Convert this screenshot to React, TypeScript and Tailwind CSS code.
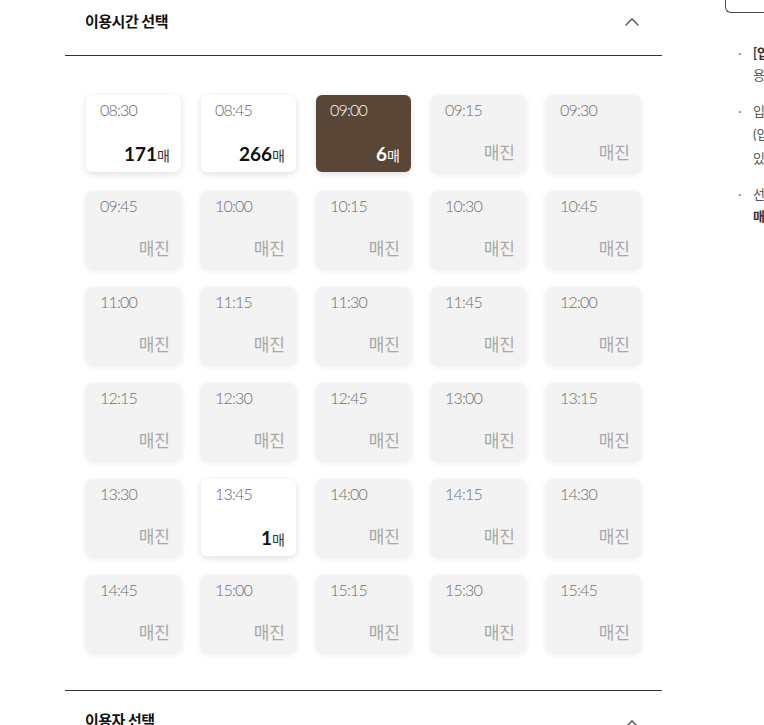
import React from "react";

type Slot = { t: string; n?: number; sel?: boolean };

const times = [
  "08:30","08:45","09:00","09:15","09:30",
  "09:45","10:00","10:15","10:30","10:45",
  "11:00","11:15","11:30","11:45","12:00",
  "12:15","12:30","12:45","13:00","13:15",
  "13:30","13:45","14:00","14:15","14:30",
  "14:45","15:00","15:15","15:30","15:45",
];
const avail: Record<string, number> = { "08:30": 171, "08:45": 266, "09:00": 6, "13:45": 1 };

const slots: Slot[] = times.map((t) => ({ t, n: avail[t], sel: t === "09:00" }));

function Chevron() {
  return (
    <svg width="16" height="10" viewBox="0 0 16 10" fill="none">
      <path d="M1.5 8.5 L8 2 L14.5 8.5" stroke="#666" strokeWidth="1.6" />
    </svg>
  );
}

function Card({ s }: { s: Slot }) {
  if (s.sel) {
    return (
      <div className="h-[77px] rounded-[6px] bg-[#5a4637] shadow-[0_2px_6px_rgba(0,0,0,0.12)] flex flex-col justify-between pl-[14px] pr-[11px] pt-[5px] pb-[4px]">
        <div className="text-[16px] leading-5 tracking-[-0.8px] text-white font-light">{s.t}</div>
        <div className="text-right text-white leading-6">
          <span className="text-[19px] font-bold">{s.n}</span>
          <span className="text-[14px]">매</span>
        </div>
      </div>
    );
  }
  if (s.n) {
    return (
      <div className="h-[77px] rounded-[6px] bg-white shadow-[0_2px_7px_rgba(0,0,0,0.13)] flex flex-col justify-between pl-[14px] pr-[11px] pt-[5px] pb-[4px]">
        <div className="text-[16px] leading-5 tracking-[-0.8px] text-[#666] font-light">{s.t}</div>
        <div className="text-right text-[#111] leading-6">
          <span className="text-[19px] font-bold">{s.n}</span>
          <span className="text-[14px] text-[#333]">매</span>
        </div>
      </div>
    );
  }
  return (
    <div className="h-[77px] rounded-[6px] bg-[#f3f3f3] shadow-[0_2px_6px_rgba(0,0,0,0.09)] flex flex-col justify-between pl-[14px] pr-[11px] pt-[5px] pb-[7px]">
      <div className="text-[16px] leading-5 tracking-[-0.8px] text-[#707070] font-light">{s.t}</div>
      <div className="text-right text-[17px] leading-6 text-[#a8a8a8]">매진</div>
    </div>
  );
}

export default function App() {
  return (
    <div
      className="w-[764px] h-[725px] overflow-hidden bg-white flex"
      style={{ fontFamily: "Lato, 'Noto Sans CJK KR', sans-serif" }}
    >
      <div className="ml-[65px] w-[597px] shrink-0">
        <div className="h-[56px] border-b border-[#333] flex items-center justify-between pl-[20px] pr-[22px] pb-[12px]">
          <div className="text-[15px] font-bold text-[#111] tracking-[-0.5px]">이용시간 선택</div>
          <Chevron />
        </div>
        <div className="pt-[39px] pb-[38px] pl-[21px] grid grid-cols-[repeat(5,95px)] gap-x-[20px] gap-y-[19px]">
          {slots.map((s) => (
            <Card key={s.t} s={s} />
          ))}
        </div>
        <div className="border-t border-[#333] flex items-start justify-between pl-[20px] pr-[22px] pt-[18px]">
          <div className="text-[15px] font-bold text-[#111] tracking-[-0.5px]">이용자 선택</div>
          <div className="pt-[10px]"><Chevron /></div>
        </div>
      </div>
      <div className="ml-[63px] w-[300px] shrink-0">
        <div className="h-[13px] border-l border-b border-[#4a4a4a] rounded-bl-[6px]" />
        <div className="pt-[29px] pl-[13px] text-[13px] leading-[22px] text-[#555]">
          <div className="relative pl-[15px]">
            <span className="absolute left-0 top-0 text-[#888]">·</span>
            <div className="font-bold text-[#333] whitespace-nowrap">[입장권] 관람 시간 안내</div>
            <div className="whitespace-nowrap">용 가능합니다.</div>
          </div>
          <div className="relative pl-[15px] mt-[14px]">
            <span className="absolute left-0 top-0 text-[#888]">·</span>
            <div className="whitespace-nowrap">입장 시간은 선택하신 회차 기준입니다.</div>
            <div className="whitespace-nowrap leading-[25px]">(입장 마감 이후에는 입장이 제한될 수</div>
            <div className="whitespace-nowrap">있습니다.</div>
          </div>
          <div className="relative pl-[15px] mt-[14px]">
            <span className="absolute left-0 top-0 text-[#888]">·</span>
            <div className="whitespace-nowrap">선택하신 시간의 잔여 수량은</div>
            <div className="whitespace-nowrap font-bold text-[#333]">매수 기준입니다.</div>
          </div>
        </div>
      </div>
    </div>
  );
}
